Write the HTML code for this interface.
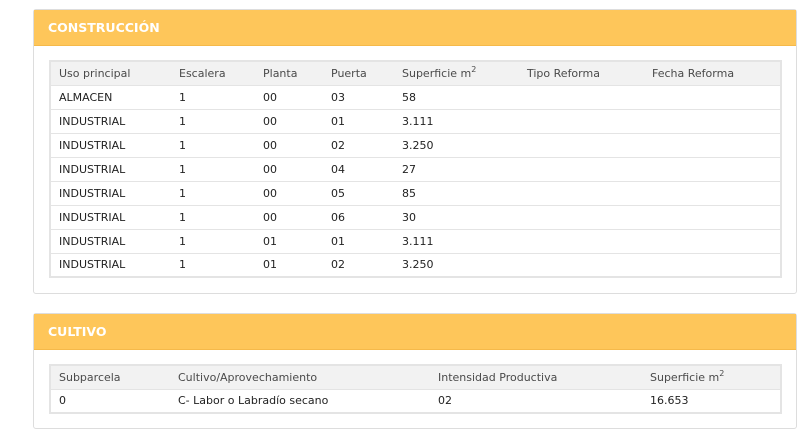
<!DOCTYPE html>
<html><head><meta charset="utf-8"><style>
*{margin:0;padding:0;box-sizing:border-box}
body{width:800px;height:430px;background:#fff;font-family:"DejaVu Sans","Liberation Sans",sans-serif;font-size:11px;color:#222;position:relative;overflow:hidden}
.panel{position:absolute;left:33px;width:764px;border:1px solid #ddd;border-radius:3px;background:#fff}
.hd{background:#fec65a;height:36px;color:#fff;font-weight:bold;font-size:12.5px;line-height:36px;padding-left:14px;border-bottom:1px solid #f5b94a}
table{position:absolute;left:15px;width:733px;border-collapse:collapse;border:2px solid #e4e4e4}
td,th{text-align:left;font-weight:normal;padding:0 0 0 8px;height:24px;border-bottom:1px solid #e4e4e4;white-space:nowrap}
th{background:#f2f2f2;color:#4a4a4a;height:24px}
tr:last-child td{border-bottom:none}
sup{font-size:8px;vertical-align:top;position:relative;top:-2px}
</style></head><body>
<div class="panel" style="top:9px;height:285px">
<div class="hd">CONSTRUCCIÓN</div>
<table style="top:50px">
<tr><th style="width:121px">Uso principal</th><th style="width:84px">Escalera</th><th style="width:68px">Planta</th><th style="width:71px">Puerta</th><th style="width:125px">Superficie m<sup>2</sup></th><th style="width:125px">Tipo Reforma</th><th>Fecha Reforma</th></tr>
<tr><td>ALMACEN</td><td>1</td><td>00</td><td>03</td><td>58</td><td></td><td></td></tr>
<tr><td>INDUSTRIAL</td><td>1</td><td>00</td><td>01</td><td>3.111</td><td></td><td></td></tr>
<tr><td>INDUSTRIAL</td><td>1</td><td>00</td><td>02</td><td>3.250</td><td></td><td></td></tr>
<tr><td>INDUSTRIAL</td><td>1</td><td>00</td><td>04</td><td>27</td><td></td><td></td></tr>
<tr><td>INDUSTRIAL</td><td>1</td><td>00</td><td>05</td><td>85</td><td></td><td></td></tr>
<tr><td>INDUSTRIAL</td><td>1</td><td>00</td><td>06</td><td>30</td><td></td><td></td></tr>
<tr><td>INDUSTRIAL</td><td>1</td><td>01</td><td>01</td><td>3.111</td><td></td><td></td></tr>
<tr><td>INDUSTRIAL</td><td>1</td><td>01</td><td>02</td><td>3.250</td><td></td><td></td></tr>
</table>
</div>
<div class="panel" style="top:313px;height:116px">
<div class="hd">CULTIVO</div>
<table style="top:50px">
<tr><th style="width:120px">Subparcela</th><th style="width:260px">Cultivo/Aprovechamiento</th><th style="width:212px">Intensidad Productiva</th><th>Superficie m<sup>2</sup></th></tr>
<tr><td>0</td><td>C- Labor o Labradío secano</td><td>02</td><td>16.653</td></tr>
</table>
</div>
</body></html>
